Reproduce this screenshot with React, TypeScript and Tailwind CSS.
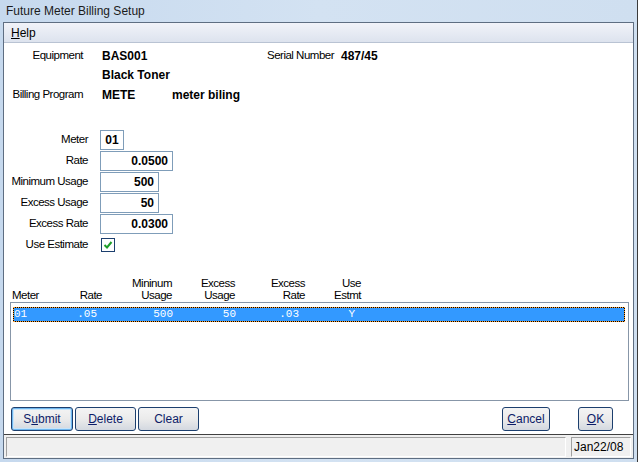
import React from "react";

// Classic WinForms-style "Future Meter Billing Setup" dialog.

const narrow = "font-['Liberation_Sans',Arial,sans-serif] text-[11.5px] tracking-[-0.5px] whitespace-nowrap";
const sans = "font-['Liberation_Sans',Arial,sans-serif]";
const mono = "font-['Liberation_Mono','Courier_New',monospace]";

function cn(...parts: (string | false | undefined)[]) {
  return parts.filter(Boolean).join(" ");
}

function Field({
  label,
  value,
  width,
  center,
}: {
  label: string;
  value: string;
  width: string;
  center?: boolean;
}) {
  return (
    <div className="flex h-[20px] items-center">
      <div className={`w-[84px] text-right text-black ${narrow}`}>{label}</div>
      <div
        className={cn(
          "ml-[12px] flex h-[20px] items-center border border-[#7f9db9] bg-white px-[4px] text-[12px] font-bold text-black",
          sans,
          width,
          center ? "justify-center" : "justify-end",
        )}
      >
        {value}
      </div>
    </div>
  );
}

function Button({
  children,
  width,
  isDefault,
}: {
  children: React.ReactNode;
  width: string;
  isDefault?: boolean;
}) {
  return (
    <button
      type="button"
      className={cn(
        "flex h-[24px] items-center justify-center rounded-[3px] border border-[#1c3f6e] bg-gradient-to-b from-[#f4f4f4] via-[#ebebeb] to-[#d3d8e0] text-[12px] text-[#0c1c68]",
        sans,
        width,
        isDefault && "shadow-[inset_0_0_0_1px_#6fb6ee,inset_0_0_0_2px_#c6e4fa]",
      )}
    >
      {children}
    </button>
  );
}

export default function App() {
  return (
    <div className="flex h-[462px] w-[638px] flex-col overflow-hidden border-r border-[#3a3a3a] bg-gradient-to-r from-[#c6d9ee] via-[#d3e2f2] to-[#cfdff0]">
      {/* title bar */}
      <div className={`flex h-[22px] shrink-0 items-center pl-[6px] text-[12px] text-[#1b1b1b] ${sans}`}>
        Future Meter Billing Setup
      </div>

      <div className="mb-[3px] ml-[3px] mr-[3px] flex flex-1 flex-col border border-[#5e6e82] bg-[#f0f0f0]">
        {/* menu */}
        <div className={`flex h-[20px] shrink-0 items-center border-b border-[#b9c3d3] bg-gradient-to-b from-[#f1f3f9] to-[#dde3ee] pl-[7px] text-[12px] text-black ${sans}`}>
          <span>
            <span className="underline">H</span>elp
          </span>
        </div>

        {/* content */}
        <div className="flex flex-1 flex-col border-b border-[#404040] bg-white">
          {/* header info */}
          <div className="flex flex-col pt-[3px]">
            <div className="flex h-[19px] items-center">
              <div className={`w-[79px] text-right ${narrow}`}>Equipment</div>
              <div className={`ml-[19px] w-[165px] text-[12px] font-bold ${sans}`}>BAS001</div>
              <div className={narrow}>Serial Number</div>
              <div className={`ml-[7px] text-[12px] font-bold ${sans}`}>487/45</div>
            </div>
            <div className="flex h-[19px] items-center">
              <div className={`ml-[98px] text-[12px] font-bold ${sans}`}>Black Toner</div>
            </div>
            <div className="flex h-[22px] items-center">
              <div className={`w-[79px] text-right ${narrow}`}>Billing Program</div>
              <div className={`ml-[19px] w-[70px] text-[12px] font-bold ${sans}`}>METE</div>
              <div className={`text-[12px] font-bold ${sans}`}>meter biling</div>
            </div>
          </div>

          {/* editable fields */}
          <div className="mt-[24px] flex flex-col gap-[1px]">
            <Field label="Meter" value="01" width="w-[24px]" center />
            <Field label="Rate" value="0.0500" width="w-[73px]" />
            <Field label="Minimum Usage" value="500" width="w-[59px]" />
            <Field label="Excess Usage" value="50" width="w-[59px]" />
            <Field label="Excess Rate" value="0.0300" width="w-[73px]" />
          </div>
          <div className="mt-[4px] flex h-[14px] items-center">
            <div className={`w-[84px] text-right ${narrow}`}>Use Estimate</div>
            <div className="ml-[13px] flex h-[14px] w-[14px] items-center justify-center border border-[#1c3f6e] bg-white">
              <svg width="10" height="10" viewBox="0 0 10 10">
                <path d="M1.5 5 L4 7.5 L8.5 2" fill="none" stroke="#1f9e2a" strokeWidth="2" />
              </svg>
            </div>
          </div>

          {/* list header */}
          <div className={`mt-[24px] flex h-[25px] items-end pl-[8px] leading-[12px] text-black ${narrow}`}>
            <div className="w-[50px]">Meter</div>
            <div className="w-[40px] text-right">Rate</div>
            <div className="w-[70px] text-right">
              Mininum
              <br />
              Usage
            </div>
            <div className="w-[63px] text-right">
              Excess
              <br />
              Usage
            </div>
            <div className="w-[70px] text-right">
              Excess
              <br />
              Rate
            </div>
            <div className="w-[56px] text-right">
              Use
              <br />
              Estmt
            </div>
          </div>

          {/* list */}
          <div className="ml-[6px] mt-[1px] h-[99px] w-[619px] border border-[#8796a8] bg-white pl-[2px] pr-[3px] pt-[4px]">
            <div className="bg-black">
              <div
                className={`flex h-[15px] items-center border border-dotted border-[#ffa030] bg-[#3399ff] bg-clip-padding text-[11px] text-white ${mono}`}
              >
                <div className="w-[46px]">01</div>
                <div className="w-[37px] text-right">.05</div>
                <div className="w-[76px] text-right">500</div>
                <div className="w-[63px] text-right">50</div>
                <div className="w-[63px] text-right">.03</div>
                <div className="w-[56px] text-right">Y</div>
              </div>
            </div>
          </div>

          {/* buttons */}
          <div className="mt-[6px] flex items-center pl-[7px] pr-[20px]">
            <div className="flex gap-[2px]">
              <Button width="w-[62px]" isDefault>
                <span>
                  S<span className="underline">u</span>bmit
                </span>
              </Button>
              <Button width="w-[61px]">
                <span>
                  <span className="underline">D</span>elete
                </span>
              </Button>
              <Button width="w-[61px]">Clear</Button>
            </div>
            <div className="ml-auto flex gap-[28px]">
              <Button width="w-[48px]">
                <span>
                  <span className="underline">C</span>ancel
                </span>
              </Button>
              <Button width="w-[35px]">
                <span>
                  <span className="underline">O</span>K
                </span>
              </Button>
            </div>
          </div>
        </div>

        {/* status bar */}
        <div className="flex h-[23px] shrink-0 items-center gap-[5px] px-[2px] pt-[1px]">
          <div className="h-[20px] flex-1 border border-b-white border-l-[#a0a0a0] border-r-white border-t-[#a0a0a0]" />
          <div className={`flex h-[20px] w-[60px] items-center border border-b-white border-l-[#a0a0a0] border-r-white border-t-[#a0a0a0] pl-[2px] text-[12px] text-black ${sans}`}>
            Jan22/08
          </div>
        </div>
      </div>
    </div>
  );
}
